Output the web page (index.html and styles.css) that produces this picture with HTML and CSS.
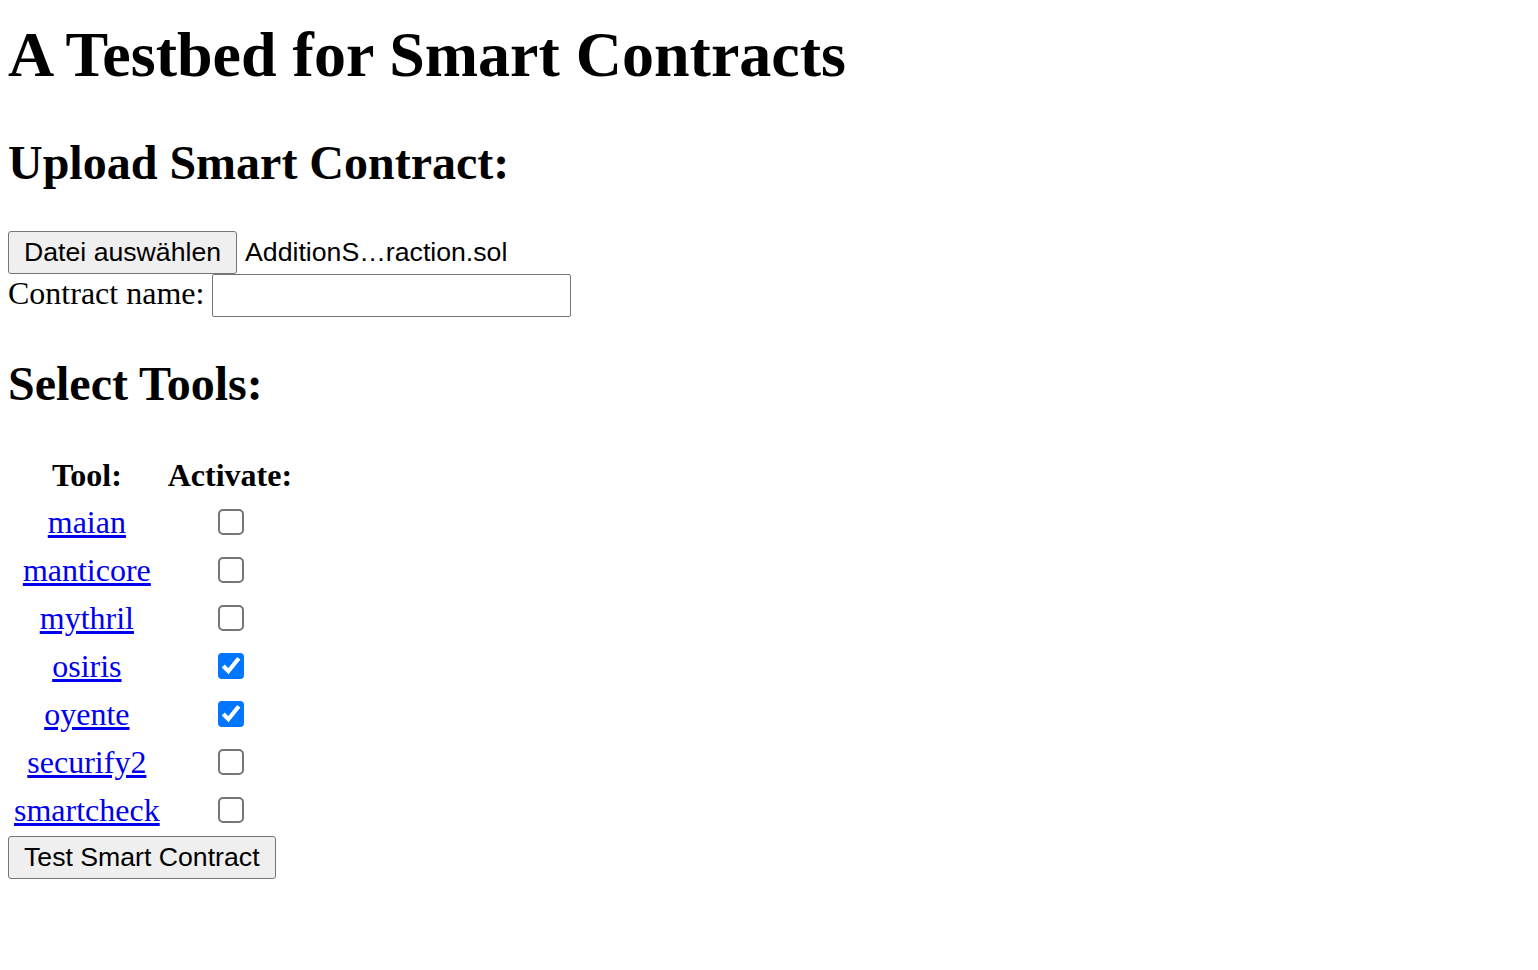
FILE: index.html
```html
<!DOCTYPE html>
<html lang="en">
<head>
<meta charset="utf-8">
<title>A Testbed for Smart Contracts</title>
<link rel="stylesheet" href="styles.css">
</head>
<body>
<h1 class="title">A Testbed for Smart Contracts</h1>
<h2 class="section">Upload Smart Contract:</h2>
<form class="upload">
  <div class="file-row">
    <button type="button" class="btn">Datei auswählen</button>
    <span class="file-name">AdditionS…raction.sol</span>
  </div>
  <div class="name-row">
    <label class="name-label" for="cname">Contract name:</label>
    <input id="cname" class="name-input" type="text">
  </div>
</form>
<h2 class="section section-tools">Select Tools:</h2>
<table class="tools">
  <thead>
    <tr><th>Tool:</th><th>Activate:</th></tr>
  </thead>
  <tbody>
    <tr><td><a href="#">maian</a></td><td class="chk"><input type="checkbox"></td></tr>
    <tr><td><a href="#">manticore</a></td><td class="chk"><input type="checkbox"></td></tr>
    <tr><td><a href="#">mythril</a></td><td class="chk"><input type="checkbox"></td></tr>
    <tr><td><a href="#">osiris</a></td><td class="chk"><input type="checkbox" checked></td></tr>
    <tr><td><a href="#">oyente</a></td><td class="chk"><input type="checkbox" checked></td></tr>
    <tr><td><a href="#">securify2</a></td><td class="chk"><input type="checkbox"></td></tr>
    <tr><td><a href="#">smartcheck</a></td><td class="chk"><input type="checkbox"></td></tr>
  </tbody>
</table>
<button type="button" class="btn">Test Smart Contract</button>
</body>
</html>
```

FILE: styles.css
```css
html, body {
  background: #ffffff;
}
body {
  margin: 8px;
  font-family: "Liberation Serif", "Times New Roman", serif;
  font-size: 32px;
  color: #000000;
}
.title {
  font-size: 64px;
  font-weight: bold;
  line-height: normal;
  margin: 10px 0 43px;
}
.section {
  font-size: 48px;
  font-weight: bold;
  line-height: normal;
  margin: 40px 0;
}
.section-tools {
  margin-top: 39px;
}
.upload {
  margin: 0;
}
.file-row {
  display: flex;
  align-items: flex-start;
  padding-top: 1px;
  height: 43px;
}
.btn {
  font-family: "Liberation Sans", Arial, sans-serif;
  font-size: 26.67px;
  color: #000000;
  background: #efefef;
  border: 1px solid #767676;
  border-radius: 3px;
  height: 43px;
  padding: 0 15px;
  margin: 0;
  line-height: normal;
}
.file-name {
  font-family: "Liberation Sans", Arial, sans-serif;
  font-size: 26.67px;
  line-height: 43px;
  margin-left: 8px;
}
.name-row {
  display: flex;
  align-items: center;
  height: 43px;
}
.name-label {
  margin-right: 8px;
  margin-bottom: 4px;
}
.name-input {
  width: 359px;
  height: 43px;
  box-sizing: border-box;
  border: 1px solid #767676;
  border-radius: 2px;
  margin: 0;
  padding: 2px 4px;
  font-family: "Liberation Sans", Arial, sans-serif;
  font-size: 26.67px;
}
.tools {
  border-collapse: separate;
  border-spacing: 4px;
  margin: 0;
}
.tools th {
  font-weight: bold;
  padding: 2px;
  text-align: center;
  line-height: normal;
}
.tools td {
  padding: 2px;
  height: 40px;
  text-align: center;
  vertical-align: middle;
  line-height: normal;
}
.tools td.chk {
  padding-left: 3px;
  padding-right: 1px;
}
.tools a {
  color: #0000ee;
  text-decoration: underline;
}
.chk input {
  zoom: 2;
  display: block;
  width: 13px;
  height: 13px;
  margin: 0 auto;
}
```
